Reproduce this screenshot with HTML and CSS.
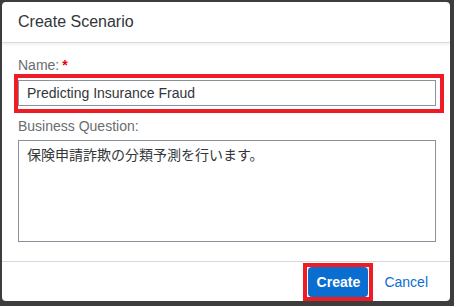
FILE: index.html
```html
<!DOCTYPE html>
<html lang="ja">
<head>
  <meta charset="UTF-8">
  <title>Create Scenario</title>
  <link rel="stylesheet" href="styles.css">
</head>
<body>
  <div class="dialog">
    <div class="dialog-header">Create Scenario</div>

    <div class="dialog-content">
      <label class="field-label">Name:<span class="required">*</span></label>
      <div class="highlight name-highlight">
        <input type="text" class="text-input" value="Predicting Insurance Fraud">
      </div>

      <label class="field-label question-label">Business Question:</label>
      <textarea class="text-area">保険申請詐欺の分類予測を行います。</textarea>
    </div>

    <div class="dialog-footer">
      <div class="highlight create-highlight">
        <button class="btn btn-primary">Create</button>
      </div>
      <button class="btn btn-link">Cancel</button>
    </div>
  </div>
</body>
</html>
```

FILE: styles.css
```css
body {
  margin: 0;
  background-color: #3d3d3d;
  font-family: "Liberation Sans", Arial, "Noto Sans CJK JP", sans-serif;
  color: #32363a;
  width: 454px;
  height: 306px;
  overflow: hidden;
}

.dialog {
  margin: 2px 4px 0 2px;
  height: 299px;
  background-color: #fff;
  border-radius: 4px;
  display: flex;
  flex-direction: column;
}

.dialog-header {
  height: 40px;
  padding-left: 16px;
  font-size: 16px;
  line-height: 40px;
  border-bottom: 1px solid #d9d9d9;
  box-shadow: 0 2px 3px rgba(0, 0, 0, 0.06);
}

.dialog-content {
  padding: 14px 14px 0 16px;
  height: 204px;
  border-bottom: 1px solid #d9d9d9;
  display: flex;
  flex-direction: column;
}

.field-label {
  font-size: 14px;
  color: #6a6d70;
  line-height: 17px;
  height: 17px;
}

.required {
  color: #e00;
  font-weight: bold;
  margin-left: 3px;
}

.highlight {
  border: 4px solid #ee1c25;
}

.name-highlight {
  margin-left: -4px;
  padding: 2px 2px 3px 0;
  width: 420px;
}

.text-input {
  display: block;
  box-sizing: border-box;
  width: 418px;
  height: 26px;
  margin: 0;
  padding: 0 8px;
  border: 1px solid #89919a;
  font-family: inherit;
  font-size: 14px;
  color: #32363a;
  outline: none;
}

.question-label {
  margin-top: 5px;
}

.text-area {
  box-sizing: border-box;
  width: 418px;
  height: 102px;
  margin: 5px 0 0;
  padding: 3px 8px;
  border: 1px solid #89919a;
  font-family: "Noto Sans CJK JP", sans-serif;
  font-size: 14px;
  color: #32363a;
  resize: none;
  outline: none;
}

.dialog-footer {
  flex: 1;
  display: flex;
  align-items: center;
  justify-content: flex-end;
  padding-right: 18px;
  gap: 7px;
}

.create-highlight {
  padding: 0 1px;
}

.btn {
  font-family: inherit;
  font-size: 14px;
  border: none;
  cursor: pointer;
}

.btn-primary {
  display: block;
  height: 30px;
  padding: 0 8px;
  background-color: #0a6ed1;
  color: #fff;
  font-weight: bold;
  border-radius: 4px;
  min-width: 60px;
}

.btn-link {
  background: none;
  color: #0a6ed1;
  padding: 0 4px;
  height: 30px;
}
```
